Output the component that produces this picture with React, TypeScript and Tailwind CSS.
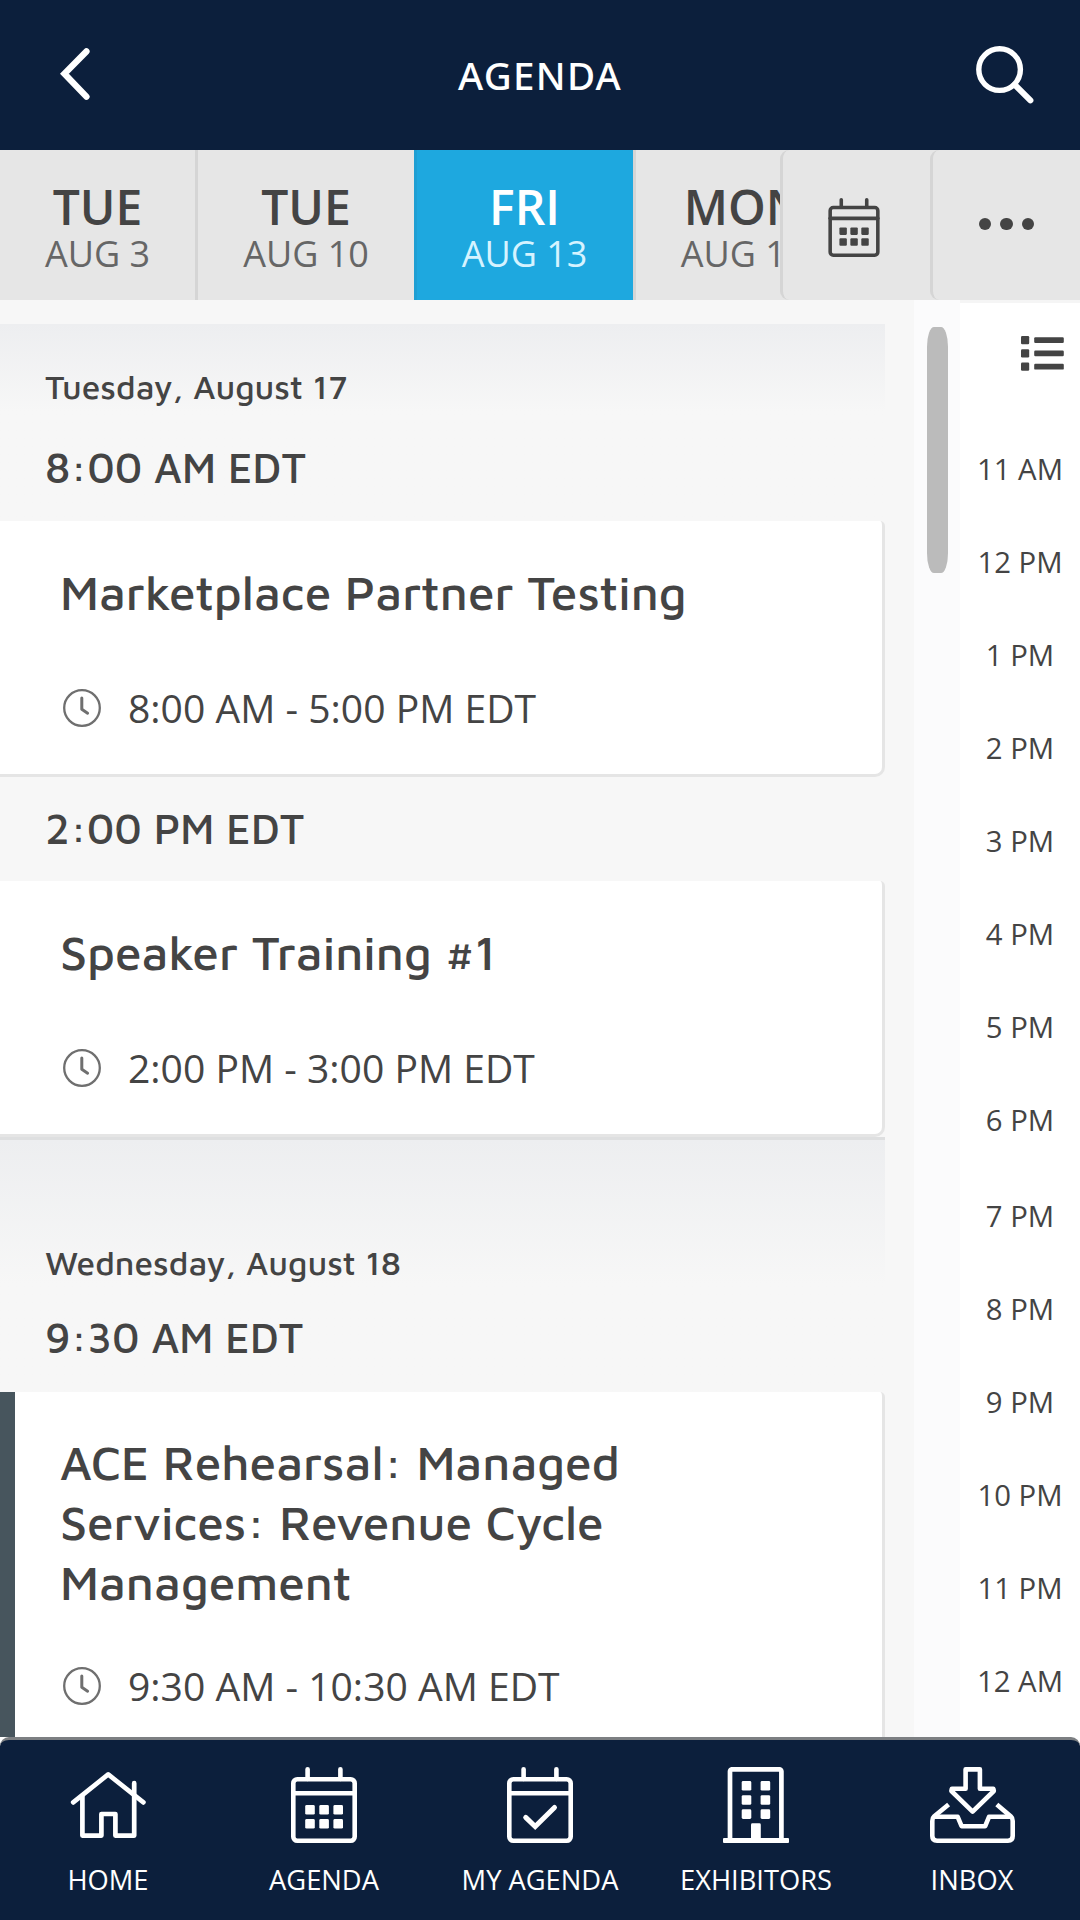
import React from 'react';

interface Session {
  title: string;
  time: string;
  accent?: boolean;
}

const DAYS = [
  { day: 'TUE', date: 'AUG 3', active: false },
  { day: 'TUE', date: 'AUG 10', active: false },
  { day: 'FRI', date: 'AUG 13', active: true },
  { day: 'MON', date: 'AUG 16', active: false }
];

const HOURS_TODAY = ['11 AM', '12 PM', '1 PM', '2 PM', '3 PM', '4 PM', '5 PM', '6 PM'];
const HOURS_LATER = ['7 PM', '8 PM', '9 PM', '10 PM', '11 PM', '12 AM'];

const CalendarFrame = () => (
  <>
    <path d="M16.6 2.3V12M49.4 2.3V12" />
    <rect x="2.3" y="12.3" width="61.4" height="61.4" rx="4" />
    <path d="M2.3 26.2H63.7" />
  </>
);

const CalendarIcon = ({ className }: { className: string }) => (
  <svg viewBox="0 0 66 76" className={className} fill="none" stroke="currentColor" strokeWidth="4.6" strokeLinecap="round">
    <CalendarFrame />
    <g fill="currentColor" stroke="none">
      {[38, 52].map((y) =>
        [14.2, 28.3, 42.4].map((x) => <rect key={`${x}-${y}`} x={x} y={y} width="9.6" height="9.6" rx="1.4" />)
      )}
    </g>
  </svg>
);

const CalendarCheckIcon = () => (
  <svg viewBox="0 0 66 76" className="h-[76px] w-[66px]" fill="none" stroke="currentColor" strokeWidth="4.6" strokeLinecap="round">
    <CalendarFrame />
    <path d="M18.7 50.4L28.2 59.6L47.5 40.4" strokeWidth="5" />
  </svg>
);

const HomeIcon = () => (
  <svg viewBox="0 0 76 76" className="h-[76px] w-[76px]" fill="none" stroke="currentColor" strokeWidth="4.7" strokeLinecap="round" strokeLinejoin="round">
    <path d="M3.2 35.4L38.2 7.4L73.4 35.4" />
    <path d="M12.4 29V68.6H31.4V47H45.4V68.6H64.2V16.2" />
  </svg>
);

const BuildingIcon = () => (
  <svg viewBox="0 0 66 76" className="h-[76px] w-[66px]" fill="none" stroke="currentColor" strokeWidth="4.7">
    <path d="M7 74V4.3A2 2 0 0 1 9 2.3H56.4A2 2 0 0 1 58.4 4.3V74" />
    <g fill="currentColor" stroke="none">
      <rect x="0" y="71" width="66" height="5" rx="1" />
      <rect x="28" y="56.3" width="9.8" height="18" rx="1.4" />
      {[14, 28.2, 42.3].map((y) =>
        [18.7, 37.6].map((x) => <rect key={`${x}-${y}`} x={x} y={y} width="9.6" height="9.6" rx="1.4" />)
      )}
    </g>
  </svg>
);

const InboxIcon = () => (
  <svg viewBox="0 0 85 76" className="h-[76px] w-[85px]" fill="none" stroke="currentColor" strokeWidth="4.6" strokeLinejoin="round">
    <path d="M35.6 2.4H49.9V21.8H63.4L63.8 24L42.6 44.6L21.4 24L21.8 21.8H35.6Z" />
    <path d="M18.6 37.4L4 49.6Q2.3 51 2.3 54V69Q2.3 73.7 7 73.7H78Q82.7 73.7 82.7 69V54Q82.7 51 81 49.6L66.8 37.4" />
    <path d="M4 49.8H27.7L31.6 59.2H55.2L59 49.8H81" />
  </svg>
);

const ClockIcon = () => (
  <svg viewBox="0 0 38 38" className="h-[38px] w-[38px]" fill="none" stroke="#6f6f6f" strokeWidth="2.3" strokeLinecap="round">
    <circle cx="19" cy="19" r="17.8" />
    <path d="M18.8 9V20.2L24.6 24.2" strokeWidth="3" strokeLinejoin="round" />
  </svg>
);

const NAV_ITEMS = [
  { label: 'HOME', icon: <HomeIcon /> },
  { label: 'AGENDA', icon: <CalendarIcon className="h-[76px] w-[66px]" /> },
  { label: 'MY AGENDA', icon: <CalendarCheckIcon /> },
  { label: 'EXHIBITORS', icon: <BuildingIcon /> },
  { label: 'INBOX', icon: <InboxIcon /> }
];

const DateHeading = ({ children }: { children: React.ReactNode }) => (
  <h2 className="pl-[45px] font-['Maven_Pro','Noto_Sans',sans-serif] text-[33.6px] leading-[44px] font-medium">{children}</h2>
);

const TimeHeading = ({ children }: { children: React.ReactNode }) => (
  <h3 className="pl-[45px] font-['Maven_Pro','Noto_Sans',sans-serif] text-[42px] leading-[48px] font-medium">{children}</h3>
);

const SessionCard = ({ title, time, accent }: Session) => (
  <div
    className={`w-[885px] rounded-tr-[5px] rounded-br-[10px] border-r-[3px] border-b-[3px] border-[#e5e5e5] bg-white pr-40 pb-[33px] ${
      accent ? 'border-l-[15px] border-l-[#47555d] pt-[40px] pl-[45px]' : 'pt-[41px] pl-[60px]'
    }`}
  >
    <h4 className="min-h-[72px] font-['Maven_Pro','Noto_Sans',sans-serif] text-[48px] leading-[60px] font-medium">{title}</h4>
    <div className="mt-[41px] flex h-[66px] items-center gap-[27px] pl-[3px]">
      <ClockIcon />
      <span className="text-[39.1px] leading-none whitespace-nowrap">{time}</span>
    </div>
  </div>
);

export default function App() {
  return (
    <div className="flex h-[1920px] w-[1080px] flex-col overflow-hidden bg-white font-['Open_Sans',sans-serif] text-[#444]">
      <header className="flex h-[150px] shrink-0 items-center justify-between bg-[#0c1f3c] px-[44px] text-white">
        <button className="w-[62px] pb-[3px] pl-4">
          <svg viewBox="0 0 30 52" className="h-[52px] w-[30px]" fill="none" stroke="currentColor" strokeWidth="6.4" strokeLinecap="round" strokeLinejoin="miter">
            <path d="M26.4 3.4L4.4 25.8L26.4 48.6" />
          </svg>
        </button>
        <h1 className="font-['Noto_Sans'] text-[38.5px] leading-none font-medium tracking-[1.3px]">AGENDA</h1>
        <button className="w-[62px] pb-px pl-[2px]">
          <svg viewBox="0 0 58 58" className="h-[58px] w-[58px]" fill="none" stroke="currentColor" strokeWidth="5.4">
            <circle cx="23.6" cy="23.6" r="20.8" />
            <path d="M38.6 38.6L54.4 54.4" strokeWidth="6" strokeLinecap="round" />
          </svg>
        </button>
      </header>

      <div className="flex h-[150px] shrink-0 bg-[#e6e6e6]">
        <div className="flex w-[780px] overflow-hidden">
          {DAYS.map((d, i) => (
            <button
              key={d.date}
              className={`flex shrink-0 flex-col items-center pt-[29px] ${i === 0 ? 'w-[195px]' : 'w-[219px] border-l-[3px]'} ${
                d.active ? 'border-[#1f9fd3] bg-[#1ea8df] pr-px text-white' : 'border-[#d5d5d5] last:pr-px'
              }`}
            >
              <span className="text-[48px] leading-[56px] font-semibold">{d.day}</span>
              <span className={`text-[36px] leading-[38px] ${d.active ? 'text-[#d5f3ff]' : 'text-[#666]'}`}>{d.date}</span>
            </button>
          ))}
        </div>
        <button className="flex w-[150px] items-center justify-center rounded-l-[9px] border-l-[3px] border-[#d5d5d5] pt-[4px] pr-[6px]">
          <CalendarIcon className="h-[59px] w-[52px]" />
        </button>
        <button className="flex w-[150px] items-center justify-center gap-[9px] rounded-l-[9px] border-l-[3px] border-[#d5d5d5] pb-[2px]">
          <i className="size-[12.5px] rounded-full bg-[#444]" />
          <i className="size-[12.5px] rounded-full bg-[#444]" />
          <i className="size-[12.5px] rounded-full bg-[#444]" />
        </button>
      </div>

      <div className="flex h-[1437px] shrink-0 overflow-hidden">
        <main className="w-[914px] bg-[#f7f7f7] pt-[24px]">
          <section>
            <div className="h-[197px] w-[885px] bg-linear-to-b from-[#edeef0] to-[#f7f7f7] to-[88px] pt-[41px]">
              <DateHeading>Tuesday, August 17</DateHeading>
              <div className="mt-[34px]">
                <TimeHeading>8:00 AM EDT</TimeHeading>
              </div>
            </div>
            <SessionCard title="Marketplace Partner Testing" time="8:00 AM - 5:00 PM EDT" />
            <div className="flex h-[104px] items-center pb-[2px]">
              <TimeHeading>2:00 PM EDT</TimeHeading>
            </div>
            <SessionCard title="Speaker Training #1" time="2:00 PM - 3:00 PM EDT" />
          </section>
          <section>
            <div className="h-[255px] w-[885px] border-t-[3px] border-[#dedfe0] bg-linear-to-b from-[#edeef0] to-[#f7f7f7] to-[145px] pt-[101px]">
              <DateHeading>Wednesday, August 18</DateHeading>
              <div className="mt-[28px]">
                <TimeHeading>9:30 AM EDT</TimeHeading>
              </div>
            </div>
            <SessionCard title="ACE Rehearsal: Managed Services: Revenue Cycle Management" time="9:30 AM - 10:30 AM EDT" accent />
          </section>
        </main>
        <div className="w-[46px] bg-[#fbfbfc] pt-[27px] pl-[13px]">
          <div className="h-[246px] w-[21px] rounded-[7px/20px] bg-[#bbb]" />
        </div>
        <aside className="flex w-[120px] flex-col items-center border-t-[3px] border-[#f5f5f5] text-[29.3px]">
          <svg viewBox="0 0 43 35" className="mt-[33px] mr-4 mb-[52px] h-[35px] w-[43px] shrink-0 self-end" fill="currentColor">
            {[0, 13.3, 26.6].map((y) => (
              <g key={y}>
                <rect x="0" y={y} width="8.2" height="8.2" rx="1.2" />
                <rect x="13.2" y={y + 1.2} width="29.6" height="5.8" rx="1.2" />
              </g>
            ))}
          </svg>
          {HOURS_TODAY.map((hour) => (
            <span key={hour} className="h-[93px] shrink-0 leading-[93px]">{hour}</span>
          ))}
          <span className="h-[3px] shrink-0" />
          {HOURS_LATER.map((hour) => (
            <span key={hour} className="h-[93px] shrink-0 leading-[93px]">{hour}</span>
          ))}
        </aside>
      </div>

      <nav className="grid h-[183px] shrink-0 grid-cols-5 rounded-t-[9px] border-t-[3px] border-[#7c7f82] bg-[#0c1f3c] text-white">
        {NAV_ITEMS.map((item) => (
          <button key={item.label} className="flex flex-col items-center pt-[27px]">
            {item.icon}
            <span className="mt-[21px] text-[27.3px] leading-[32px] whitespace-nowrap">{item.label}</span>
          </button>
        ))}
      </nav>
    </div>
  );
}
